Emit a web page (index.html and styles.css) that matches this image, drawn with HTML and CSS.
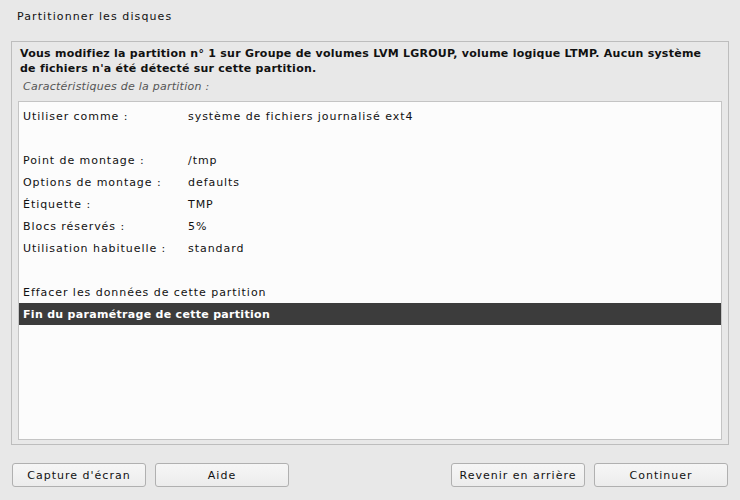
FILE: index.html
```html
<!DOCTYPE html>
<html lang="fr">
<head>
<meta charset="utf-8">
<title>Partitionner les disques</title>
<link rel="stylesheet" href="styles.css">
</head>
<body>
<div class="screen">
  <h1 class="title">Partitionner les disques</h1>
  <div class="frame">
    <p class="intro">Vous modifiez la partition n° 1 sur Groupe de volumes LVM LGROUP, volume logique LTMP. Aucun système de fichiers n'a été détecté sur cette partition.</p>
    <p class="caption">Caractéristiques de la partition :</p>
    <div class="list">
      <div class="row"><span class="label">Utiliser comme :</span><span class="value">système de fichiers journalisé ext4</span></div>
      <div class="row"></div>
      <div class="row"><span class="label">Point de montage :</span><span class="value">/tmp</span></div>
      <div class="row"><span class="label">Options de montage :</span><span class="value">defaults</span></div>
      <div class="row"><span class="label">Étiquette :</span><span class="value">TMP</span></div>
      <div class="row"><span class="label">Blocs réservés :</span><span class="value">5%</span></div>
      <div class="row"><span class="label">Utilisation habituelle :</span><span class="value">standard</span></div>
      <div class="row"></div>
      <div class="row"><span class="label">Effacer les données de cette partition</span></div>
      <div class="row selected"><span class="label">Fin du paramétrage de cette partition</span></div>
    </div>
  </div>
  <div class="buttons">
    <div class="group">
      <button class="btn">Capture d'écran</button>
      <button class="btn">Aide</button>
    </div>
    <div class="group">
      <button class="btn">Revenir en arrière</button>
      <button class="btn">Continuer</button>
    </div>
  </div>
</div>
</body>
</html>
```
FILE: styles.css
```css
html, body {
  margin: 0;
  padding: 0;
  background: #e8e8e8;
}
.screen {
  width: 740px;
  height: 500px;
  overflow: hidden;
  font-family: "DejaVu Sans", sans-serif;
  font-size: 11px;
  color: #111;
  display: flex;
  flex-direction: column;
}
.title {
  margin: 0;
  padding: 10px 0 0 17px;
  height: 41px;
  box-sizing: border-box;
  font-size: 11px;
  font-weight: normal;
  line-height: 14px;
  letter-spacing: 1.1px;
}
.frame {
  margin: 0 11px;
  height: 404px;
  box-sizing: border-box;
  border: 1px solid #bdbdbd;
  display: flex;
  flex-direction: column;
  padding: 4px 6px 4px 6px;
}
.intro {
  margin: 0;
  padding: 0 14px 0 2px;
  font-weight: bold;
  line-height: 15px;
  font-size: 11px;
  letter-spacing: 0.25px;
}
.caption {
  margin: 3px 0 0 0;
  padding-left: 5px;
  font-style: italic;
  color: #555;
  font-size: 11px;
  line-height: 16px;
  letter-spacing: 0.25px;
}
.list {
  margin-top: 6px;
  flex: 1;
  background: #fcfcfc;
  border: 1px solid #c4c4c4;
  padding-top: 3px;
}
.row {
  height: 22px;
  display: flex;
  align-items: center;
  padding-left: 4px;
  font-size: 11px;
  letter-spacing: 0.95px;
  white-space: nowrap;
}
.label {
  width: 165px;
}
.row.selected {
  background: #3c3c3c;
  color: #fff;
  font-weight: bold;
  letter-spacing: 0.3px;
}
.row.selected .label {
  width: auto;
}
.buttons {
  display: flex;
  justify-content: space-between;
  padding: 0 12px 0 12px;
  margin-top: 18px;
}
.group {
  display: flex;
  gap: 9px;
}
.btn {
  width: 134px;
  height: 24px;
  border: 1px solid #b0b0b0;
  border-radius: 3px;
  background: linear-gradient(#f6f6f6, #ececec);
  font-family: "DejaVu Sans", sans-serif;
  font-size: 11px;
  letter-spacing: 1px;
  color: #111;
  padding: 0;
}
```
